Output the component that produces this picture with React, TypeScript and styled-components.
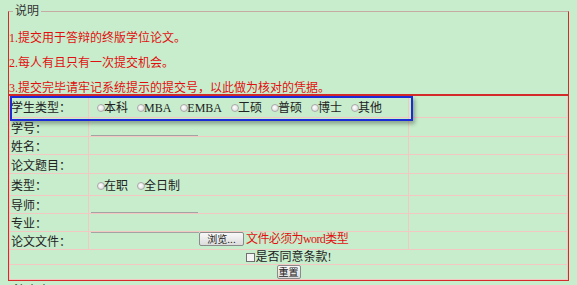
import React from "react"
import styled, { createGlobalStyle } from "styled-components"

const GlobalStyle = createGlobalStyle`
  html, body { margin: 0; padding: 0; overflow: hidden; }
  body {
    background: #c7edcc;
    font-family: "Liberation Serif", "Noto Sans CJK SC", serif;
    font-size: 12px;
    color: #222;
  }
`

const Page = styled.div`
  padding: 3px 8px 0;
`

const Notice = styled.fieldset`
  position: relative;
  margin: 0;
  padding: 2px 0 0 0;
  border: 1px solid #d42a2a;
  border-top-color: #c4aca4;
`

const Legend = styled.legend`
  margin-left: 4px;
  padding: 0 2px;
  line-height: 16px;
  color: #333;
`

const Rule = styled.p`
  margin: 9px 0;
  line-height: 16px;
  color: #e01010;
  &:last-of-type { margin-bottom: -2px; }
`

const FormTable = styled.table`
  position: relative;
  width: 100%;
  border-collapse: collapse;
  border-top: 2px solid #d42a2a;
`

const Row = styled.tr<{ $h: number }>`
  height: ${p => p.$h}px;
`

const Cell = styled.td<{ $w?: number; $center?: boolean; $valign?: string }>`
  padding: 0 1px;
  border: 1px solid #f3c8c2;
  ${p => (p.$w ? `width: ${p.$w}px;` : "")}
  text-align: ${p => (p.$center ? "center" : "left")};
  white-space: nowrap;
  vertical-align: ${p => p.$valign ?? "middle"};
  line-height: 14px;
`

const LabelCell = styled(Cell)`
  padding-top: 4px;
  padding-bottom: 0;
  line-height: 12px;
`

const Field = styled.div<{ $indent?: number; $top?: number }>`
  display: flex;
  align-items: center;
  padding-left: ${p => p.$indent ?? 1}px;
  padding-top: ${p => p.$top ?? 0}px;
`

const Choice = styled.label`
  display: inline-flex;
  align-items: center;
  margin-right: 9px;
`

const Radio = styled.input.attrs({ type: "radio" })`
  appearance: none;
  box-sizing: border-box;
  width: 8px;
  height: 8px;
  margin: 0 -1px 0 0;
  border: 1px solid #a9a9a9;
  border-radius: 50%;
  background: radial-gradient(circle at 40% 40%, #ffffff, #d4d4d4);
`

const TextBox = styled.input<{ $w: number; $h?: number; $line?: "top" | "bottom" }>`
  display: block;
  box-sizing: border-box;
  width: ${p => p.$w}px;
  height: ${p => p.$h ?? 15}px;
  margin: 0;
  padding: 0;
  border: none;
  ${p => (p.$line === "top" ? "border-top" : "border-bottom")}: 1px solid #a3a3a3;
  background: transparent;
`

const PlainButton = styled.button<{ $w: number }>`
  box-sizing: border-box;
  width: ${p => p.$w}px;
  height: 14px;
  padding: 0;
  border: 1px solid #8a8a8a;
  border-radius: 2px;
  background: linear-gradient(#f8f8f8, #dcdcdc);
  font-family: "Noto Sans CJK SC", sans-serif;
  font-size: 10px;
  line-height: 12px;
  color: #222;
  vertical-align: top;
`

const Hint = styled.span`
  color: #e01010;
  margin-left: 2px;
  letter-spacing: -0.6px;
`

const Check = styled.input.attrs({ type: "checkbox" })`
  appearance: none;
  width: 9px;
  height: 9px;
  margin: 0 1px 0 0;
  border: 1px solid #707070;
  background: #f4f4f4;
  vertical-align: -1px;
`

const Highlight = styled.div`
  position: absolute;
  left: 0;
  top: 1px;
  width: 399px;
  height: 21px;
  border: 2px solid #1b2bd6;
  box-shadow: 2px 3px 4px rgba(0, 0, 0, 0.3);
  pointer-events: none;
`

const NextNotice = styled.fieldset`
  margin: 2px 0 0;
  padding: 0;
  border: none;
  border-top: 1px solid #aaa;
`

const degrees = ["本科", "MBA", "EMBA", "工硕", "普硕", "博士", "其他"]
const studyModes = ["在职", "全日制"]

const rules = [
  "1.提交用于答辩的终版学位论文。",
  "2.每人有且只有一次提交机会。",
  "3.提交完毕请牢记系统提示的提交号，以此做为核对的凭据。",
]

export default function App() {
  return (
    <Page>
      <GlobalStyle />
      <Notice>
        <Legend>说明</Legend>
        {rules.map(r => (
          <Rule key={r}>{r}</Rule>
        ))}
        <FormTable>
          <tbody>
            <Row $h={22}>
              <LabelCell $w={76}>学生类型：</LabelCell>
              <Cell $w={317}>
                <Field $indent={7} $top={3}>
                  {degrees.map(d => (
                    <Choice key={d}>
                      <Radio name="degree" />
                      {d}
                    </Choice>
                  ))}
                </Field>
              </Cell>
              <Cell>
                <Highlight />
              </Cell>
            </Row>
            <Row $h={19}>
              <LabelCell>学号：</LabelCell>
              <Cell $valign="bottom"><Field><TextBox $w={107} $h={18} /></Field></Cell>
              <Cell />
            </Row>
            <Row $h={18}>
              <LabelCell>姓名：</LabelCell>
              <Cell />
              <Cell />
            </Row>
            <Row $h={19}>
              <LabelCell>论文题目：</LabelCell>
              <Cell />
              <Cell />
            </Row>
            <Row $h={22}>
              <LabelCell>类型：</LabelCell>
              <Cell>
                <Field $indent={7} $top={3}>
                  {studyModes.map(m => (
                    <Choice key={m}>
                      <Radio name="mode" />
                      {m}
                    </Choice>
                  ))}
                </Field>
              </Cell>
              <Cell />
            </Row>
            <Row $h={18}>
              <LabelCell>导师：</LabelCell>
              <Cell $valign="bottom"><Field><TextBox $w={107} $h={17} /></Field></Cell>
              <Cell />
            </Row>
            <Row $h={18}>
              <LabelCell>专业：</LabelCell>
              <Cell />
              <Cell />
            </Row>
            <Row $h={18}>
              <LabelCell>论文文件：</LabelCell>
              <Cell $valign="top">
                <Field>
                  <TextBox $w={108} $line="top" />
                  <PlainButton $w={45}>浏览...</PlainButton>
                  <Hint>文件必须为word类型</Hint>
                </Field>
              </Cell>
              <Cell />
            </Row>
            <Row $h={14}>
              <Cell colSpan={3} $center>
                <Check />是否同意条款!
              </Cell>
            </Row>
            <Row $h={15}>
              <Cell colSpan={3} $center>
                <PlainButton $w={24}>重置</PlainButton>
              </Cell>
            </Row>
          </tbody>
        </FormTable>
      </Notice>
      <NextNotice>
        <Legend>注意事项</Legend>
      </NextNotice>
    </Page>
  )
}
